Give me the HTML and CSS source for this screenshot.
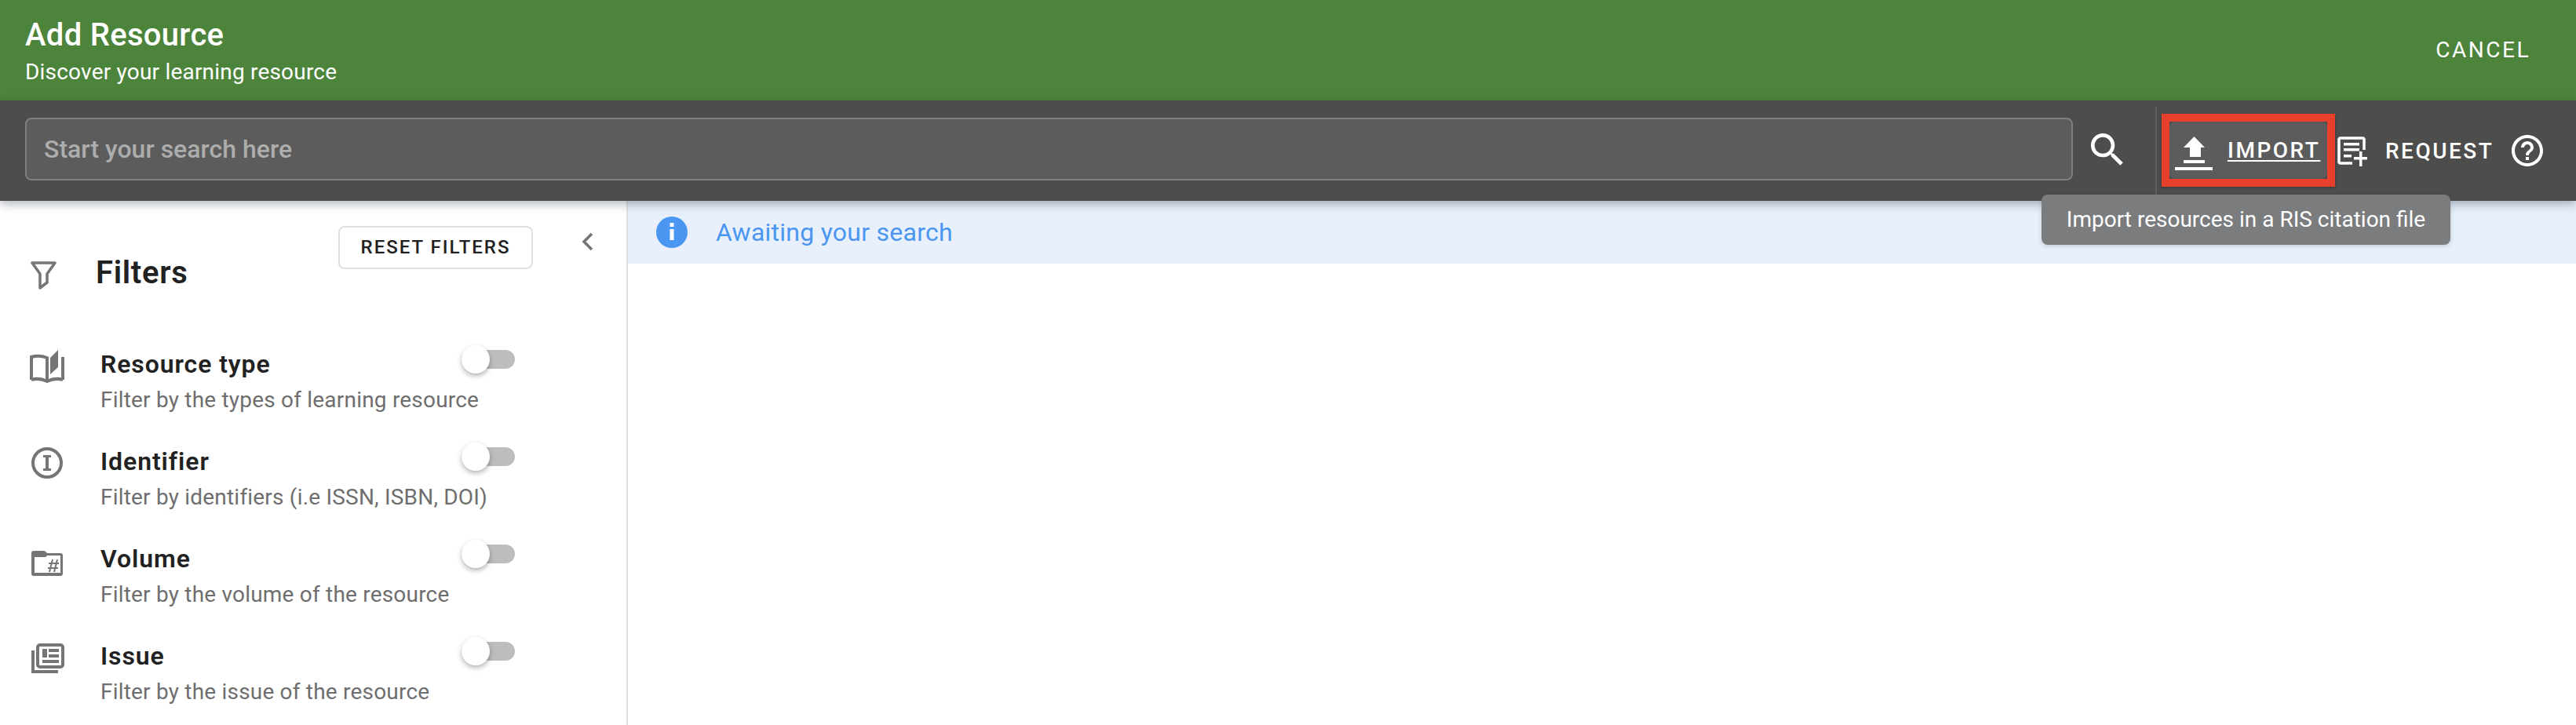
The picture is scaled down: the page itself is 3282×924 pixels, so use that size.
FILE: index.html
```html
<!DOCTYPE html>
<html lang="en">
<head>
<meta charset="utf-8">
<title>Add Resource</title>
<link rel="stylesheet" href="styles.css">
</head>
<body>
<header class="header">
  <div class="header-text">
    <div class="title">Add Resource</div>
    <div class="subtitle">Discover your learning resource</div>
  </div>
  <div class="cancel">CANCEL</div>
</header>
<div class="toolbar">
  <div class="search-field">Start your search here</div>
  <svg class="search-icon" viewBox="0 0 24 24"><path d="M15.5 14h-.79l-.28-.27C15.41 12.59 16 11.11 16 9.5 16 5.91 13.09 3 9.5 3S3 5.91 3 9.5 5.91 16 9.5 16c1.61 0 3.09-.59 4.23-1.57l.27.28v.79l5 4.99L20.49 19l-4.99-5zm-6 0C7.01 14 5 11.99 5 9.5S7.01 5 9.5 5 14 7.01 14 9.5 11.99 14 9.5 14z"/></svg>
  <div class="divider"></div>
  <div class="import-frame">
    <div class="import-btn">
      <svg class="import-icon" viewBox="0 0 48 43"><path d="M11 14L24.500 0 38 14H33V26H19V14Z"/><rect x="11" y="30" width="27" height="4"/><rect y="39" width="48" height="4"/></svg>
      <span class="import-label">IMPORT</span>
    </div>
  </div>
  <svg class="request-icon" viewBox="0 0 38 38"><path d="M19 34H4Q2 34 2 32V4Q2 2 4 2H32Q34 2 34 4V17" class="stroke"/><rect x="8" y="8" width="20" height="3.500"/><rect x="8" y="15" width="20" height="3.500"/><rect x="8" y="23" width="10" height="3.500"/><rect x="28" y="19" width="3.500" height="19"/><rect x="21" y="26" width="17" height="3.500"/></svg>
  <span class="request-label">REQUEST</span>
  <svg class="help-icon" viewBox="0 0 24 24"><path d="M11 18h2v-2h-2v2zm1-16C6.48 2 2 6.48 2 12s4.48 10 10 10 10-4.48 10-10S17.52 2 12 2zm0 18c-4.41 0-8-3.59-8-8s3.59-8 8-8 8 3.59 8 8-3.59 8-8 8zm0-14c-2.21 0-4 1.79-4 4h2c0-1.1.9-2 2-2s2 .9 2 2c0 2-3 1.75-3 5h2c0-2.25 3-2.5 3-5 0-2.21-1.79-4-4-4z"/></svg>
  <div class="tooltip">Import resources in a RIS citation file</div>
</div>
<main class="main">
  <aside class="sidebar">
    <div class="filters-head">
      <svg class="filter-icon" viewBox="0 0 33 37"><path d="M2 2H31L21 16V27L12 34V16Z"/></svg>
      <div class="filters-title">Filters</div>
      <div class="reset">RESET FILTERS</div>
      <svg class="chevron" viewBox="0 0 16 24"><path d="M14 2L4 12 14 22"/></svg>
    </div>
    <div class="filter-row">
      <svg class="row-icon" viewBox="0 0 44 42"><path class="line" d="M2 38V9Q12 6 22 10V38M42 9V38M2 38Q12 35 22 40 32 35 42 38"/><path d="M36 0V22L26 31V10Z"/></svg>
      <div class="row-body"><div class="row-head"><span class="row-label">Resource type</span><span class="switch"><span class="thumb"></span></span></div><div class="row-desc">Filter by the types of learning resource</div></div>
    </div>
    <div class="filter-row">
      <svg class="row-icon" viewBox="0 0 44 42"><circle class="line" cx="22" cy="20" r="18"/><path d="M17 10H27V13H24V27H27V30H17V27H20V13H17Z"/></svg>
      <div class="row-body"><div class="row-head"><span class="row-label">Identifier</span><span class="switch"><span class="thumb"></span></span></div><div class="row-desc">Filter by identifiers (i.e ISSN, ISBN, DOI)</div></div>
    </div>
    <div class="filter-row">
      <svg class="row-icon" viewBox="0 0 44 42"><path fill-rule="evenodd" d="M5 8H18Q20 8 22 11H39Q42 11 42 14V37Q42 40 39 40H5Q2 40 2 37V11Q2 8 5 8ZM6 16V36H39V14H22L20 16Z"/><path class="hash" d="M29 19L25 35M35 19L31 35M24 24H37M23 30H36"/></svg>
      <div class="row-body"><div class="row-head"><span class="row-label">Volume</span><span class="switch"><span class="thumb"></span></span></div><div class="row-desc">Filter by the volume of the resource</div></div>
    </div>
    <div class="filter-row">
      <svg class="row-icon" viewBox="0 0 44 42"><path class="line" d="M4 11V38H36"/><rect class="line" x="10" y="4" width="32" height="28" rx="3"/><rect x="16" y="9" width="6" height="11"/><rect x="24" y="9" width="13" height="4"/><rect x="24" y="16" width="13" height="4"/><rect x="16" y="23" width="21" height="4"/></svg>
      <div class="row-body"><div class="row-head"><span class="row-label">Issue</span><span class="switch"><span class="thumb"></span></span></div><div class="row-desc">Filter by the issue of the resource</div></div>
    </div>
  </aside>
  <section class="results">
    <div class="info-strip">
      <svg class="info-icon" viewBox="0 0 40 40"><circle cx="20" cy="20" r="20"/><rect class="info-mark" x="17.500" y="16" width="5" height="14"/><rect class="info-mark" x="17.500" y="8" width="5" height="5"/></svg>
      <span class="info-text">Awaiting your search</span>
    </div>
  </section>
</main>
</body>
</html>
```
FILE: styles.css
```css
* { box-sizing: border-box; }
html, body { margin: 0; height: 924px; overflow: hidden; background: #fff; }
body { font-family: Roboto, "Liberation Sans", sans-serif; color: #212121; }

.header { height: 128px; background: #4d843b; color: #fff; display: flex; justify-content: space-between; padding: 21px 58px 0 32px; }
.title { font-size: 40px; line-height: 48px; font-weight: 500; letter-spacing: 0.3px; }
.subtitle { font-size: 28px; line-height: 40px; margin-top: 3px; letter-spacing: 0.2px; }
.cancel { font-size: 28px; line-height: 32px; margin-top: 27px; letter-spacing: 2.5px; }

.toolbar { position: relative; z-index: 2; height: 128px; background: #4d4d4d; color: #fff; display: flex; align-items: center; padding: 0 38px 0 32px; box-shadow: 0 4px 12px rgba(30,40,60,.35); }
.search-field { flex: 1; height: 80px; margin-top: -4px; border: 2px solid #7f7f7f; border-radius: 8px; background: #5c5c5c; color: #adadad; font-size: 32px; line-height: 76px; padding-left: 22px; font-weight: 500; }
.search-icon { width: 56px; height: 56px; margin: -2px 33px 0 16px; fill: #fff; flex: none; }
.divider { width: 2px; height: 112px; background: #5f5f5f; margin-right: 6px; flex: none; }
.import-frame { width: 221px; height: 93px; border: 10px solid #e8402a; background: #4d4d4d; flex: none; margin-top: -1px; box-shadow: 0 1px 3px rgba(0,0,0,.3); }
.import-btn { height: 100%; background: #5c5c5c; border-radius: 8px; display: flex; align-items: center; padding-left: 7px; }
.import-icon { width: 48px; height: 43px; fill: #fff; flex: none; margin-top: 8px; }
.import-label { font-size: 28px; font-weight: 500; letter-spacing: 2.5px; margin-left: 19px; text-decoration: underline; text-decoration-thickness: 2px; text-underline-offset: 3px; }
.request-icon { width: 38px; height: 38px; fill: #fff; margin: 2px 23px 0 3px; flex: none; }
.stroke { fill: none; stroke: #fff; stroke-width: 3.5; }
.request-label { font-size: 28px; font-weight: 500; letter-spacing: 2.5px; width: 157px; flex: none; }
.help-icon { width: 48px; height: 48px; fill: #fff; flex: none; }
.tooltip { position: absolute; left: 2601px; top: 120px; width: 521px; height: 64px; border-radius: 8px; background: #7b7c7e; color: #fff; font-size: 28px; line-height: 64px; text-align: center; box-shadow: 0 2px 6px rgba(0,0,0,.15); }

.main { display: flex; height: 668px; }
.sidebar { width: 800px; flex: none; border-right: 2px solid #e0e0e0; overflow: hidden; }
.filters-head { position: relative; height: 179px; padding-left: 39px; display: flex; }
.filter-icon { width: 33px; height: 37px; margin-top: 77px; fill: none; stroke: #757575; stroke-width: 3.5; stroke-linejoin: round; flex: none; }
.filters-title { font-size: 40px; line-height: 48px; font-weight: 600; letter-spacing: 0.7px; margin: 68px 0 0 50px; }
.reset { position: absolute; left: 431px; top: 32px; width: 248px; height: 55px; border: 2px solid #e0e0e0; border-radius: 8px; font-size: 24px; font-weight: 500; letter-spacing: 2px; line-height: 51px; text-align: center; color: #212121; }
.chevron { position: absolute; left: 740px; top: 40px; width: 16px; height: 24px; fill: none; stroke: #757575; stroke-width: 3.5; }

.filter-row { display: grid; grid-template-columns: 90px 1fr; height: 124px; padding-left: 38px; }
.row-icon { width: 44px; height: 42px; margin-top: 11px; fill: #757575; }
.line { fill: none; stroke: #757575; stroke-width: 4; }
.hash { fill: none; stroke: #757575; stroke-width: 2; }
.row-body { width: 528px; }
.row-head { display: flex; justify-content: space-between; height: 44px; }
.row-label { font-size: 32px; line-height: 44px; font-weight: 600; letter-spacing: 0.9px; margin-top: 7px; }
.row-desc { font-size: 28px; line-height: 40px; color: #6e6e6e; margin-top: 11px; letter-spacing: 0.2px; }
.switch { position: relative; width: 68px; height: 24px; margin-top: 11px; border-radius: 12px; background: #bdbdbd; }
.thumb { position: absolute; left: 0; top: -6px; width: 36px; height: 36px; border-radius: 50%; background: #fff; box-shadow: 0 3px 6px rgba(0,0,0,.3); }

.results { flex: 1; }
.info-strip { height: 80px; background: #e8f0fb; display: flex; align-items: center; padding-left: 36px; }
.info-icon { width: 40px; height: 40px; fill: #4a96f0; flex: none; }
.info-mark { fill: #fff; }
.info-text { font-size: 32px; color: #4a96f0; margin-left: 36px; letter-spacing: 0.25px; }
```
